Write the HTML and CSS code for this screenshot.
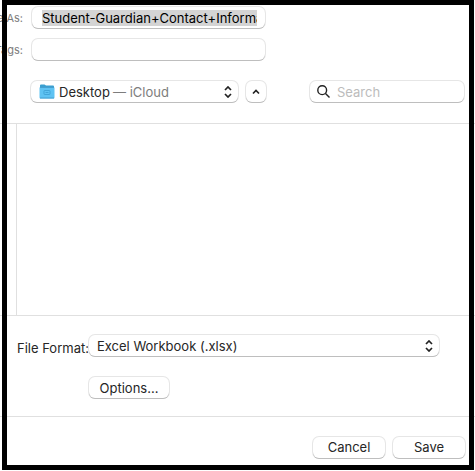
FILE: index.html
```html
<!doctype html>
<html lang="en">
  <head>
    <meta charset="UTF-8" />
    <meta name="viewport" content="width=device-width, initial-scale=1.0" />
    <title>Save As</title>
    <link rel="stylesheet" href="styles.css">
  </head>
  <body>
    <form class="dialog">
      <div class="fields">
        <div class="field-row">
          <label class="field-label" for="fileName">Save As:</label>
          <div class="control text-field">
            <input class="file-name" type="text" id="fileName" value="Student-Guardian+Contact+Information" />
          </div>
        </div>
        <div class="field-row">
          <label class="field-label" for="tags">Tags:</label>
          <div class="control text-field">
            <input type="text" id="tags" />
          </div>
        </div>
      </div>

      <div class="toolbar">
        <div class="control location">
          <select id="location" aria-label="Location">
            <option>Desktop</option>
          </select>
          <svg class="folder" viewBox="0 0 16 15" aria-hidden="true">
            <path fill="#3a9fd0" d="M1 1.5Q1 .5 2 .5h3.5l1.5 1H14q1 0 1 1V5H1z" />
            <rect x="0.5" y="3" width="15" height="11.5" rx="1" fill="#5fc3f3" />
            <path stroke="#469fd0" d="M1 3.5h14M1 14h14" />
            <rect x="5" y="6.5" width="6" height="4" rx="0.5" fill="none" stroke="#43a5d8" />
            <path stroke="#43a5d8" d="M6.5 8.5h3" />
          </svg>
          <span class="location-detail">— iCloud</span>
          <svg class="chevrons" viewBox="0 0 8 12" aria-hidden="true">
            <path d="M1 4l3-3 3 3M1 8l3 3 3-3" />
          </svg>
        </div>
        <button class="control collapse" type="button" aria-label="Collapse">
          <svg viewBox="0 0 8 6" aria-hidden="true">
            <path d="M1 4.5l3-3 3 3" />
          </svg>
        </button>
        <div class="control search">
          <svg viewBox="0 0 13 13" aria-hidden="true">
            <circle cx="5.2" cy="5.2" r="4.4" />
            <path d="M8.5 8.5l4 4" />
          </svg>
          <input type="search" aria-label="Search" placeholder="Search" />
        </div>
      </div>

      <div class="browser">
        <div class="sidebar"></div>
        <div class="files"></div>
      </div>

      <div class="format">
        <label for="format">File Format:</label>
        <div class="control format-select">
          <select id="format">
            <option>Excel Workbook (.xlsx)</option>
          </select>
          <svg class="chevrons" viewBox="0 0 8 12" aria-hidden="true">
            <path d="M1 4l3-3 3 3M1 8l3 3 3-3" />
          </svg>
        </div>
        <button class="control options" type="button">Options...</button>
      </div>

      <div class="actions">
        <button class="control" type="button">Cancel</button>
        <button class="control" type="submit">Save</button>
      </div>
    </form>
    <div class="frame"></div>
  </body>
</html>
```
FILE: styles.css
```css
:root {
  --text-color: #262626;
  --muted-color: #7d7d7d;
  --line-color: #e0e0e0;
  --control-height: 21px;
}

* {
  box-sizing: border-box;
}

body {
  margin: 0;
  background-color: #ffffff;
  color: var(--text-color);
  font-family: Inter, "Liberation Sans", sans-serif;
  font-size: 13px;
  line-height: 16px;
}

input,
select,
button {
  font: inherit;
  color: inherit;
}

input,
select {
  width: 100%;
  min-width: 0;
  margin: 0;
  padding: 0;
  border: none;
  background: none;
  appearance: none;
  outline: none;
}

.dialog {
  display: flex;
  flex-direction: column;
  min-height: 100vh;
}

/* heavy border laid over the dialog */
.frame {
  position: fixed;
  inset: 0 1px 1px 2px;
  border: 5px solid #000000;
  pointer-events: none;
}

.control {
  display: flex;
  align-items: center;
  height: var(--control-height);
  padding: 0;
  border: none;
  border-radius: 6px;
  background-color: #ffffff;
  box-shadow: 0 1px 0 #bebebe, 0 0 0 1px #e6e6e6;
}

.control svg {
  flex: none;
  fill: none;
  stroke: #222222;
  stroke-width: 1.7;
}

.control .folder {
  stroke: none;
  stroke-width: 1;
}

button.control {
  justify-content: center;
}

.fields {
  display: flex;
  flex-direction: column;
  gap: 11px;
  padding-top: 7px;
}

.field-row {
  display: flex;
  align-items: center;
  gap: 9px;
}

.field-label {
  display: flex;
  justify-content: flex-end;
  width: 23px;
  color: var(--muted-color);
  font-size: 11px;
  white-space: nowrap;
}

.text-field {
  width: 233px;
  padding: 0 8px 0 10px;
}

.file-name {
  height: 16px;
  background-color: #d4d4d4;
  color: #000000;
}

.toolbar {
  display: flex;
  gap: 8px;
  padding: 21px 11px 21px 31px;
}

.location {
  position: relative;
  width: 207px;
}

.location select {
  height: 100%;
  padding-left: 28px;
}

.folder {
  position: absolute;
  left: 8px;
  width: 16px;
  height: 15px;
  pointer-events: none;
}

.location-detail {
  position: absolute;
  left: 82px;
  color: var(--muted-color);
  pointer-events: none;
}

.chevrons {
  position: absolute;
  right: 6px;
  width: 8px;
  height: 12px;
  pointer-events: none;
}

.collapse {
  width: 20px;
}

.collapse svg {
  width: 8px;
  height: 6px;
}

.search {
  gap: 7px;
  width: 154px;
  margin-left: auto;
  padding: 0 7px;
}

.search svg {
  width: 13px;
  height: 13px;
  stroke-width: 1.4;
}

.search input::placeholder {
  color: #bcbcbc;
  opacity: 1;
}

.browser {
  display: flex;
  flex: 1;
  border-top: 1px solid var(--line-color);
  border-bottom: 1px solid var(--line-color);
}

.sidebar {
  width: 17px;
  border-right: 1px solid var(--line-color);
}

.files {
  flex: 1;
}

.format {
  display: grid;
  grid-template-columns: 72px 1fr;
  align-items: center;
  row-gap: 21px;
  padding: 19px 36px 18px 17px;
  border-bottom: 1px solid var(--line-color);
}

.format label {
  padding-top: 4px;
  white-space: nowrap;
}

.format-select {
  position: relative;
}

.format-select select {
  height: 100%;
  padding-left: 8px;
}

.options {
  grid-column: 2;
  width: 80px;
}

.actions {
  display: flex;
  justify-content: flex-end;
  gap: 8px;
  padding: 20px 10px 13px;
}

.actions .control {
  width: 72px;
  padding-bottom: 2px;
}
```
